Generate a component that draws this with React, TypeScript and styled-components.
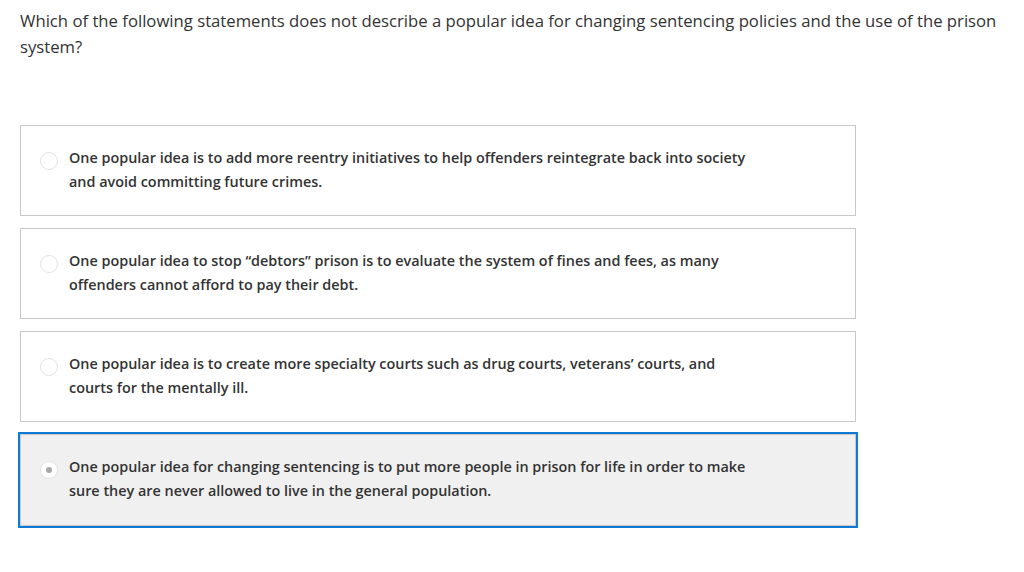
import styled, { createGlobalStyle } from 'styled-components';

const GlobalStyle = createGlobalStyle`
    body {
        margin: 0;
        background: #fff;
        font-family: "Open Sans", "Liberation Sans", sans-serif;
    }
`

const options = [
    "One popular idea is to add more reentry initiatives to help offenders reintegrate back into society and avoid committing future crimes.",
    "One popular idea to stop \u201cdebtors\u201d prison is to evaluate the system of fines and fees, as many offenders cannot afford to pay their debt.",
    "One popular idea is to create more specialty courts such as drug courts, veterans\u2019 courts, and courts for the mentally ill.",
    "One popular idea for changing sentencing is to put more people in prison for life in order to make sure they are never allowed to live in the general population.",
];

export default function App() {
    const selected = 3;

    return (
        <>
            <GlobalStyle />
            <Page>
                <Question>
                    Which of the following statements does not describe a popular idea for changing sentencing policies and the use of the prison system?
                </Question>
                <OptionList>
                    {options.map((text, i) => (
                        <Option key={i} $selected={i === selected}>
                            <Radio $selected={i === selected} />
                            <OptionText>{text}</OptionText>
                        </Option>
                    ))}
                </OptionList>
            </Page>
        </>
    );
}

const Page = styled.div`
    padding: 8px 20px 40px 20px;
    width: 1024px;
    box-sizing: border-box;
`

const Question = styled.p`
    margin: 0;
    color: #333;
    font-size: 16.7px;
    line-height: 26px;
`

const OptionList = styled.div`
    margin-top: 65px;
    width: 836px;
    display: flex;
    flex-direction: column;
    gap: 12px;
`

const Option = styled.div<{ $selected: boolean }>`
    display: flex;
    align-items: flex-start;
    gap: 11px;
    height: ${p => p.$selected ? '92px' : '91px'};
    padding: 20px 0 0 19px;
    box-sizing: border-box;
    border: 1px solid #c8c8c8;
    background: ${p => p.$selected ? '#f0f0f0' : '#fff'};
    outline: ${p => p.$selected ? '2px solid #0f7ad6' : 'none'};
`

const Radio = styled.span<{ $selected: boolean }>`
    flex: none;
    width: 18px;
    height: 18px;
    margin-top: 6px;
    border-radius: 50%;
    border: 1px solid #e3e3e3;
    background: #fff;
    box-sizing: border-box;
    display: flex;
    align-items: center;
    justify-content: center;

    &::after {
        content: '';
        display: ${p => p.$selected ? 'block' : 'none'};
        width: 6px;
        height: 6px;
        border-radius: 50%;
        background: #a8a8a8;
    }
`

const OptionText = styled.div`
    width: 686px;
    color: #333;
    font-size: 14.4px;
    font-weight: 600;
    line-height: 24px;
`
